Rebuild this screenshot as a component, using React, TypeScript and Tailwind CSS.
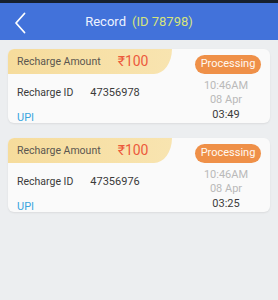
const records = [
  { id: '47356978', time: '10:46AM', date: '08 Apr', left: '03:49' },
  { id: '47356976', time: '10:46AM', date: '08 Apr', left: '03:25' },
];

function RecordCard({ r }: { r: (typeof records)[number] }) {
  return (
    <div className="flex h-[74px] flex-col rounded-[6px] bg-[#fafafa] shadow-[0_1px_2px_rgba(0,0,0,0.08)]">
      {/* top strip */}
      <div className="flex h-[25px] items-start justify-between">
        <div className="flex h-[25px] w-[164px] items-center rounded-tl-[6px] rounded-br-[18px_25px] bg-gradient-to-r from-[#f6dc9c] to-[#f8e4b0] pl-[9px]">
          <span className="text-[10.5px] text-[#5b5650]">Recharge Amount</span>
          <span className="ml-[17px] text-[14px] text-[#ec5a3c]">₹100</span>
        </div>
        <div className="mr-[9px] mt-[6px] flex h-[19px] w-[66px] items-center justify-center rounded-full bg-[#ef9048] text-[11px] text-[#fff8f0]">
          Processing
        </div>
      </div>
      {/* details */}
      <div className="flex flex-1 justify-between">
        <div className="flex flex-col pl-[9px] pt-[12px]">
          <div className="flex h-[14px] items-center text-[10.5px] text-[#3a3a3a]">
            <span>Recharge ID</span>
            <span className="ml-[17px] text-[11px]">{r.id}</span>
          </div>
          <div className="mt-[11px] flex h-[14px] items-center text-[11px] text-[#3aa5de]">UPI</div>
        </div>
        <div className="mr-[11px] flex w-[66px] flex-col items-center pt-[5px] text-[11px] leading-[14px]">
          <span className="text-[#b9b9b9]">{r.time}</span>
          <span className="text-[#b9b9b9]">{r.date}</span>
          <span className="leading-[15px] text-[#3c3c3c]">{r.left}</span>
        </div>
      </div>
    </div>
  );
}

export default function App() {
  return (
    <div className="flex h-[300px] w-[278px] flex-col bg-[#eceef0] font-['Roboto',sans-serif]">
      <div className="h-[3px] bg-[#16202e]" />
      {/* header */}
      <header className="relative flex h-[37px] items-center justify-center bg-[#4272da]">
        <svg className="absolute left-[13px] top-[9px]" width="14" height="22" viewBox="0 0 14 22">
          <path d="M11.5 1.5 L3 11 L11.5 20.5" fill="none" stroke="#ffffff" strokeWidth="1.8" strokeLinecap="round" strokeLinejoin="round" />
        </svg>
        <span className="text-[13px] text-[#eef2ff]">Record</span>
        <span className="ml-[6px] text-[13px] text-[#d6e47c]">(ID 78798)</span>
      </header>
      <main className="flex flex-col gap-[15px] px-[8px] pt-[9px]">
        {records.map((r) => (
          <RecordCard key={r.id} r={r} />
        ))}
      </main>
    </div>
  );
}
